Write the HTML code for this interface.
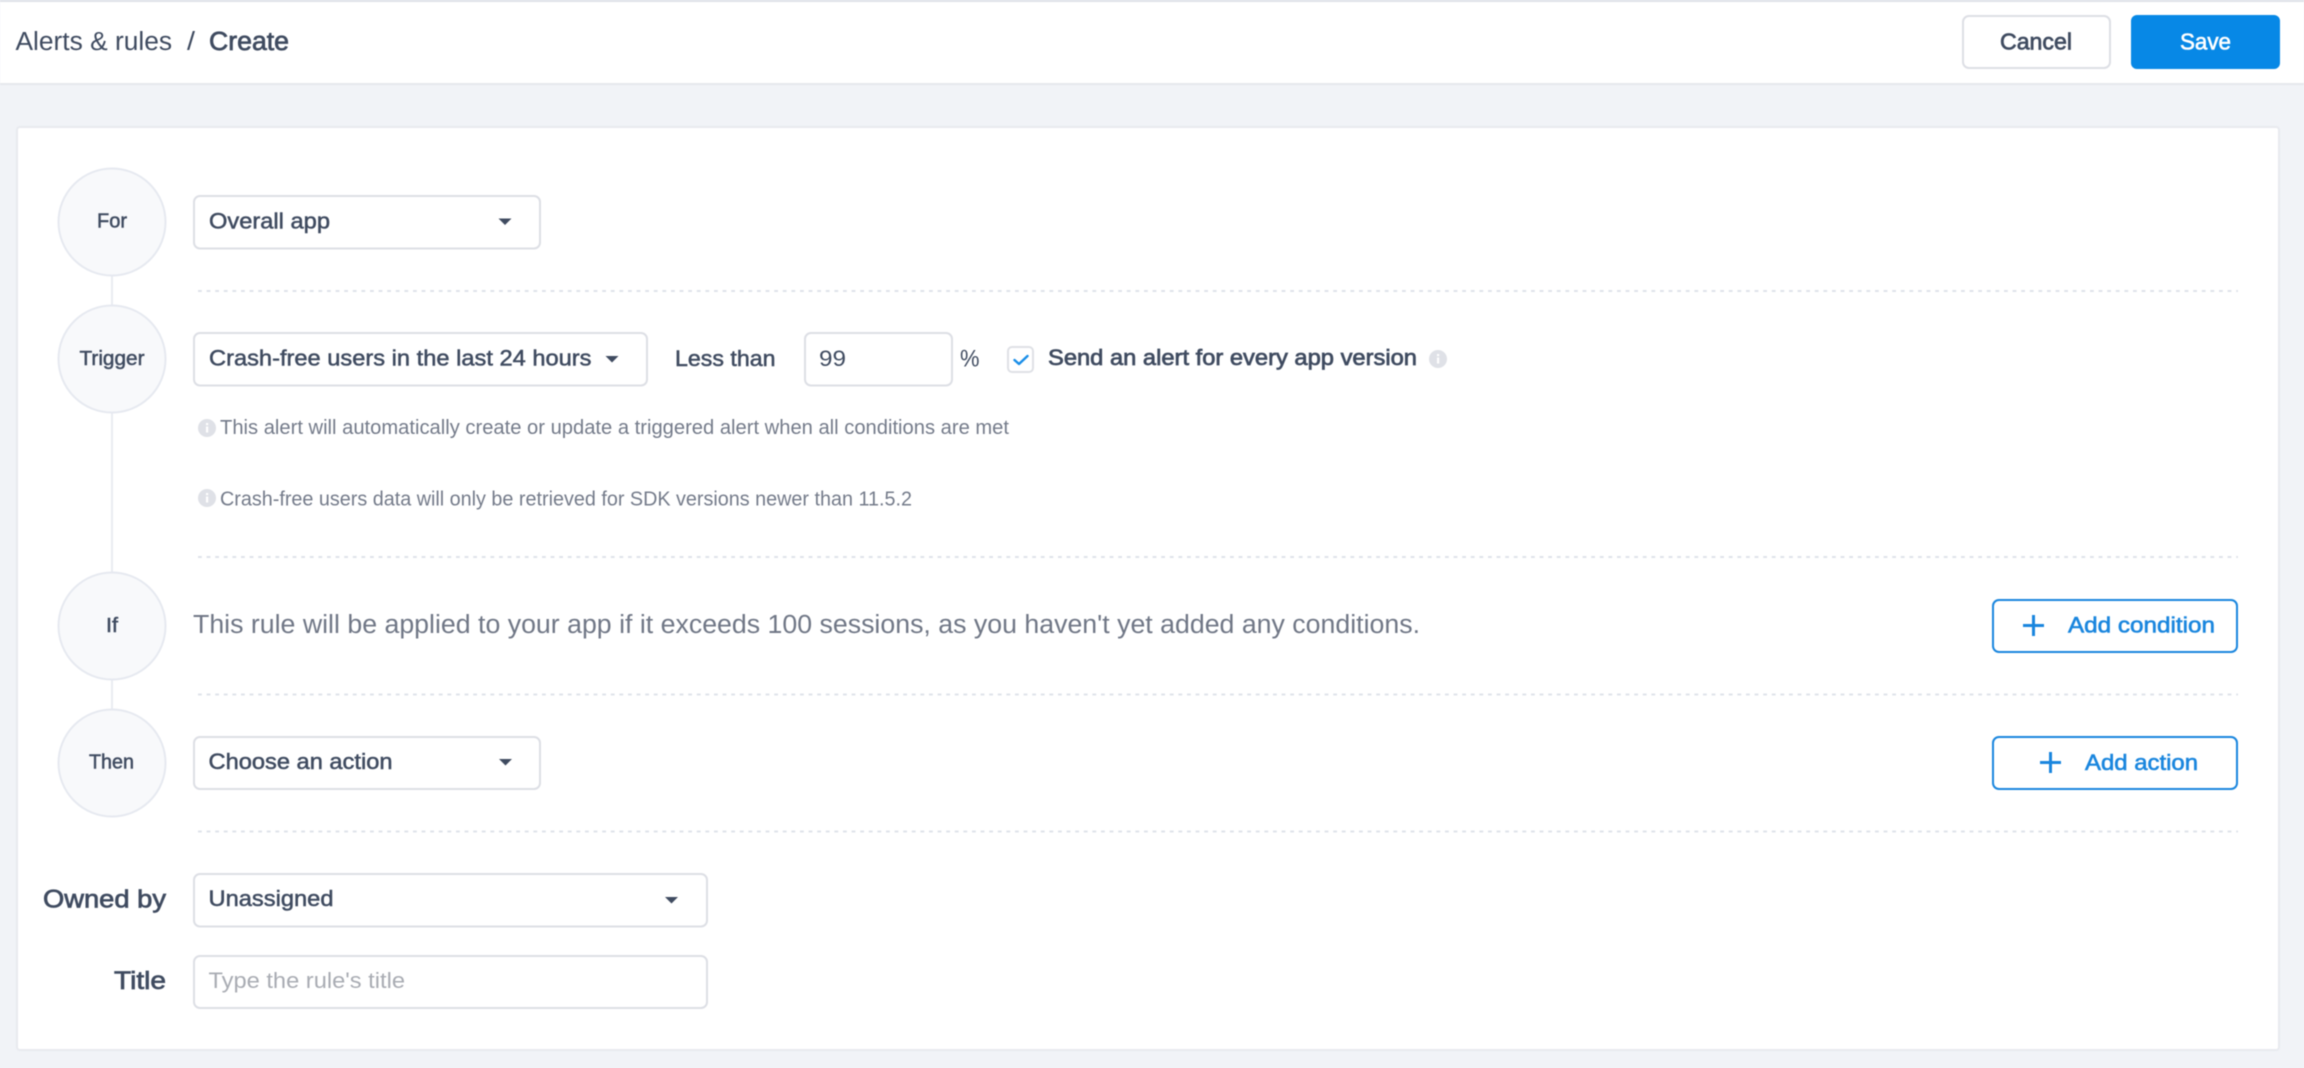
<!DOCTYPE html>
<html lang="en">
<head>
<meta charset="utf-8">
<title>Alerts &amp; rules / Create</title>
<style>
html,body{margin:0;padding:0;width:2304px;height:1068px;overflow:hidden;background:#f1f3f7}
svg{display:block;position:absolute;left:0;top:0;filter:blur(.45px)}
text{font-family:"Liberation Sans",Arial,sans-serif;fill:#3f4b60}
.m{stroke:#3f4b60;stroke-width:.5px}
.s{stroke:#3f4b60;stroke-width:.7px}
.h{fill:#747b8a;font-size:20px}
.b{fill:#1a86de;stroke:#1a86de;stroke-width:.6px;font-size:22.500px}
.box{fill:#fff;stroke:#dddfe5;stroke-width:2}
.circ{fill:#f8f9fb;stroke:#e6e9f0;stroke-width:2}
.d{stroke:#dfe3ea;stroke-width:2;stroke-dasharray:3.800 4.800}
.c{stroke:#e9ecf2;stroke-width:2}
.ar{fill:#3f4b60}
</style>
</head>
<body>
<svg width="2304" height="1068" viewBox="0 0 2304 1068" xmlns="http://www.w3.org/2000/svg">
  <!-- Header -->
  <rect x="0" y="0" width="2304" height="84" fill="#fff"/>
  <rect x="0" y="0" width="2304" height="2" fill="#e0e2e8"/>
  <rect x="0" y="83" width="2304" height="2" fill="#e6e8ed"/>
  <text x="15.500" y="50" font-size="25.500" textLength="156.500" lengthAdjust="spacingAndGlyphs">Alerts &amp; rules</text>
  <text x="187" y="50" font-size="25.500" textLength="8" lengthAdjust="spacingAndGlyphs">/</text>
  <text x="209" y="50" font-size="25.500" class="s" textLength="80" lengthAdjust="spacingAndGlyphs">Create</text>

  <rect class="box" x="1963" y="16" width="147" height="52" rx="6"/>
  <text x="2000" y="49.500" font-size="23" class="s" textLength="72" lengthAdjust="spacingAndGlyphs">Cancel</text>
  <rect x="2131" y="15" width="149" height="54" rx="6" fill="#0788e6"/>
  <text x="2180" y="49.500" font-size="23" style="fill:#fff;stroke:#fff;stroke-width:.6px" textLength="51" lengthAdjust="spacingAndGlyphs">Save</text>

  <!-- Card -->
  <rect x="17" y="127" width="2262" height="923" rx="3" fill="#fff" stroke="#e8eaef" stroke-width="2"/>

  <!-- Connectors -->
  <line class="c" x1="112" y1="276" x2="112" y2="305"/>
  <line class="c" x1="112" y1="413" x2="112" y2="572"/>
  <line class="c" x1="112" y1="680" x2="112" y2="709"/>

  <!-- Circles -->
  <circle class="circ" cx="112" cy="222" r="53.500"/>
  <circle class="circ" cx="112" cy="359" r="53.500"/>
  <circle class="circ" cx="112" cy="626" r="53.500"/>
  <circle class="circ" cx="112" cy="763" r="53.500"/>
  <text x="97" y="227.500" font-size="20.500" class="m" textLength="30" lengthAdjust="spacingAndGlyphs">For</text>
  <text x="79.500" y="365" font-size="20.500" class="m" textLength="65" lengthAdjust="spacingAndGlyphs">Trigger</text>
  <text x="106" y="632" font-size="20.500" class="m" textLength="12" lengthAdjust="spacingAndGlyphs">If</text>
  <text x="89" y="768.500" font-size="20.500" class="m" textLength="45" lengthAdjust="spacingAndGlyphs">Then</text>

  <!-- Dashed separators -->
  <line class="d" x1="198" y1="291" x2="2238" y2="291"/>
  <line class="d" x1="198" y1="557" x2="2238" y2="557"/>
  <line class="d" x1="198" y1="694.500" x2="2238" y2="694.500"/>
  <line class="d" x1="198" y1="831.500" x2="2238" y2="831.500"/>

  <!-- For -->
  <rect class="box" x="194" y="196" width="346" height="52.500" rx="6"/>
  <text x="209" y="228.500" font-size="22" class="m" textLength="121" lengthAdjust="spacingAndGlyphs">Overall app</text>
  <path class="ar" d="M498.500 218.500h13l-6.500 6.500z"/>

  <!-- Trigger -->
  <rect class="box" x="194" y="333" width="453" height="52.500" rx="6"/>
  <text x="209" y="365.500" font-size="22" class="m" textLength="382.500" lengthAdjust="spacingAndGlyphs">Crash-free users in the last 24 hours</text>
  <path class="ar" d="M605.500 356h13l-6.500 6.500z"/>
  <text x="675" y="366" font-size="22" class="m" textLength="100.500" lengthAdjust="spacingAndGlyphs">Less than</text>
  <rect class="box" x="805" y="333" width="147" height="52.500" rx="6"/>
  <text x="819" y="366" font-size="22" textLength="27" lengthAdjust="spacingAndGlyphs">99</text>
  <text x="960" y="366.500" font-size="24" textLength="19.500" lengthAdjust="spacingAndGlyphs">%</text>
  <rect x="1008" y="347" width="25" height="25" rx="4" fill="#fff" stroke="#dfe1e6" stroke-width="2"/>
  <path d="M1014.500 360l4.500 4 8.500-8" fill="none" stroke="#1a8ee8" stroke-width="2.400" stroke-linecap="round" stroke-linejoin="round"/>
  <text x="1048" y="365" font-size="22" class="s" textLength="369" lengthAdjust="spacingAndGlyphs">Send an alert for every app version</text>
  <circle cx="1438" cy="359" r="9" fill="#dfe1e7"/>
  <rect x="1437" y="357.500" width="2.200" height="6" fill="#fff"/>
  <rect x="1437" y="354" width="2.200" height="2.200" fill="#fff"/>

  <!-- Hints -->
  <circle cx="207" cy="428" r="9" fill="#dfe1e7"/>
  <rect x="206" y="426.500" width="2.200" height="6" fill="#fff"/>
  <rect x="206" y="423" width="2.200" height="2.200" fill="#fff"/>
  <text class="h" x="220" y="434" textLength="789" lengthAdjust="spacingAndGlyphs">This alert will automatically create or update a triggered alert when all conditions are met</text>
  <circle cx="207" cy="498" r="9" fill="#dfe1e7"/>
  <rect x="206" y="496.500" width="2.200" height="6" fill="#fff"/>
  <rect x="206" y="493" width="2.200" height="2.200" fill="#fff"/>
  <text class="h" x="220" y="505.500" textLength="692" lengthAdjust="spacingAndGlyphs">Crash-free users data will only be retrieved for SDK versions newer than 11.5.2</text>

  <!-- If -->
  <text x="193" y="633" font-size="25.500" style="fill:#707786" textLength="1227" lengthAdjust="spacingAndGlyphs">This rule will be applied to your app if it exceeds 100 sessions, as you haven't yet added any conditions.</text>
  <rect x="1993" y="600" width="244" height="52" rx="6" fill="#fff" stroke="#1a86de" stroke-width="2"/>
  <path d="M2023 625.500h21M2033.500 615v21" stroke="#1a86de" stroke-width="3" fill="none"/>
  <text class="b" x="2068" y="632.300" textLength="147" lengthAdjust="spacingAndGlyphs">Add condition</text>

  <!-- Then -->
  <rect class="box" x="194" y="737" width="346" height="52" rx="6"/>
  <text x="208.500" y="769" font-size="22" class="m" textLength="184" lengthAdjust="spacingAndGlyphs">Choose an action</text>
  <path class="ar" d="M499 759h13l-6.500 6.500z"/>
  <rect x="1993" y="737" width="244" height="52" rx="6" fill="#fff" stroke="#1a86de" stroke-width="2"/>
  <path d="M2040 762.500h21M2050.500 752v21" stroke="#1a86de" stroke-width="3" fill="none"/>
  <text class="b" x="2085" y="770" textLength="113" lengthAdjust="spacingAndGlyphs">Add action</text>

  <!-- Owned by -->
  <text x="43" y="907.700" font-size="25" class="s" textLength="123" lengthAdjust="spacingAndGlyphs">Owned by</text>
  <rect class="box" x="194" y="874" width="513" height="52.500" rx="6"/>
  <text x="208.500" y="906" font-size="22" class="m" textLength="125" lengthAdjust="spacingAndGlyphs">Unassigned</text>
  <path class="ar" d="M665 897h13l-6.500 6.500z"/>

  <!-- Title -->
  <text x="114" y="989" font-size="25" class="s" textLength="52" lengthAdjust="spacingAndGlyphs">Title</text>
  <rect class="box" x="194" y="956" width="513" height="52" rx="6"/>
  <text x="208.500" y="988" font-size="22" style="fill:#a9acb3" textLength="196.500" lengthAdjust="spacingAndGlyphs">Type the rule's title</text>
</svg>
</body>
</html>
